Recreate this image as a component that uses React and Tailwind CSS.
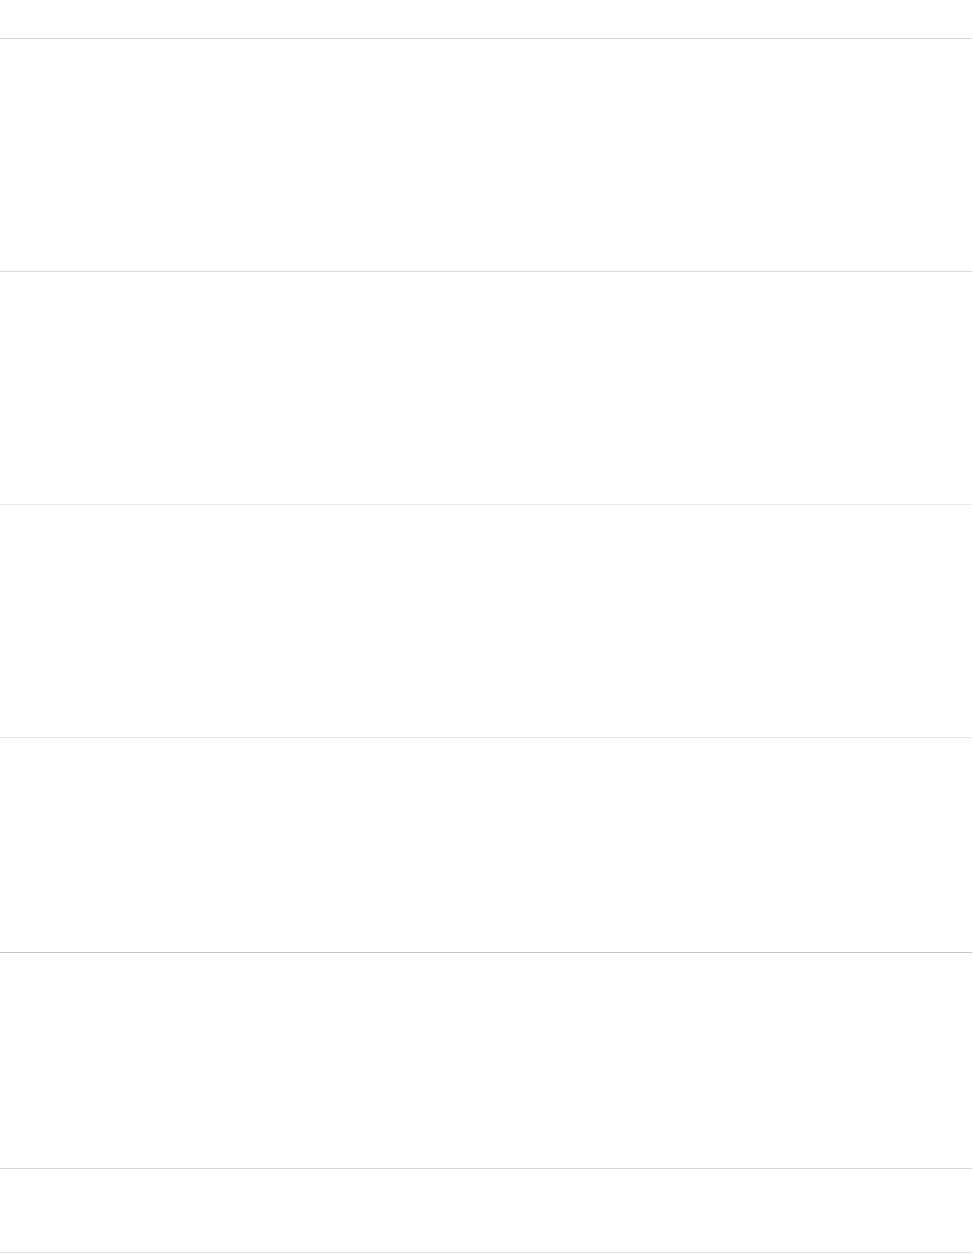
const ROWS = [
    { h: 'h-[39px]', border: 'border-[#cdd7de]' },
    { h: 'h-[233px]', border: 'border-[#d3dadf]' },
    { h: 'h-[233px]', border: 'border-[#e4e9ec]' },
    { h: 'h-[233px]', border: 'border-[#e1e7eb]' },
    { h: 'h-[215px]', border: 'border-[#bcc6cc]' },
    { h: 'h-[216px]', border: 'border-[#cfd8de]' },
    { h: 'h-[84px]', border: 'border-[#dde3e7]' },
];

export default function App() {
    return (
        <div className="min-h-screen w-full bg-white">
            <div className="w-[972px] flex flex-col">
                {ROWS.map((r, i) => (
                    <div key={i} className={`${r.h} border-b ${r.border}`} />
                ))}
            </div>
        </div>
    );
}
